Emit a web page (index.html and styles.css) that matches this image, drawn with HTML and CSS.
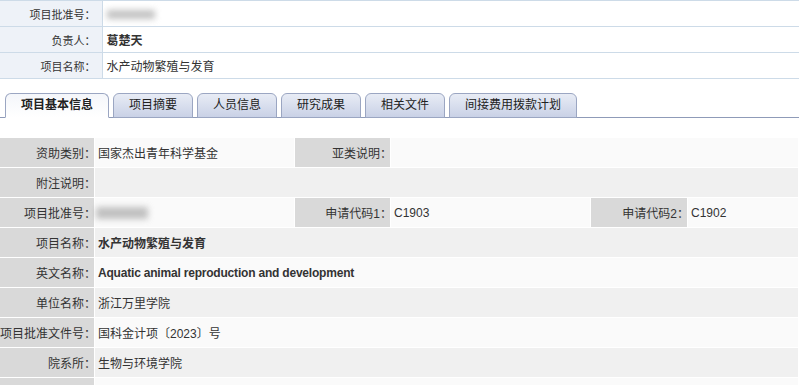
FILE: index.html
```html
<!DOCTYPE html>
<html lang="zh-CN">

<head>
    <meta charset="UTF-8">
    <meta name="viewport" content="width=device-width, initial-scale=1.0">
    <title>项目信息</title>

    <link rel="stylesheet" href="styles.css">
</head>

<body>
    <!-- Summary header -->
    <table class="summary">
        <colgroup>
            <col class="summary-label-col">
            <col>
        </colgroup>
        <tr>
            <th>项目批准号：</th>
            <td><span class="smudge smudge-sm"></span></td>
        </tr>
        <tr>
            <th>负责人：</th>
            <td class="strong">葛楚天</td>
        </tr>
        <tr>
            <th>项目名称：</th>
            <td>水产动物繁殖与发育</td>
        </tr>
    </table>

    <!-- Tabs -->
    <ul class="tabs">
        <li class="tab active">项目基本信息</li>
        <li class="tab">项目摘要</li>
        <li class="tab">人员信息</li>
        <li class="tab">研究成果</li>
        <li class="tab">相关文件</li>
        <li class="tab">间接费用拨款计划</li>
    </ul>

    <!-- Basic info -->
    <table class="info">
        <colgroup>
            <col class="c-label1">
            <col class="c-value">
            <col class="c-label2">
            <col class="c-value">
            <col class="c-label3">
            <col>
        </colgroup>
        <tr>
            <th>资助类别：</th>
            <td>国家杰出青年科学基金</td>
            <th>亚类说明：</th>
            <td colspan="3"></td>
        </tr>
        <tr>
            <th>附注说明：</th>
            <td colspan="5"></td>
        </tr>
        <tr>
            <th>项目批准号：</th>
            <td><span class="smudge smudge-lg"></span></td>
            <th>申请代码1：</th>
            <td>C1903</td>
            <th>申请代码2：</th>
            <td>C1902</td>
        </tr>
        <tr>
            <th>项目名称：</th>
            <td colspan="5" class="strong">水产动物繁殖与发育</td>
        </tr>
        <tr>
            <th>英文名称：</th>
            <td colspan="5" class="strong en">Aquatic animal reproduction and development</td>
        </tr>
        <tr>
            <th>单位名称：</th>
            <td colspan="5">浙江万里学院</td>
        </tr>
        <tr>
            <th>项目批准文件号：</th>
            <td colspan="5">国科金计项〔2023〕号</td>
        </tr>
        <tr>
            <th>院系所：</th>
            <td colspan="5">生物与环境学院</td>
        </tr>
        <tr>
            <th></th>
            <td colspan="5"></td>
        </tr>
    </table>
</body>

</html>
```

FILE: styles.css
```css
body {
    margin: 0;
    font-family: "Liberation Sans", "Noto Sans CJK SC", sans-serif;
    font-size: 12px;
    color: #333;
    background-color: white;
}

table {
    width: 100%;
    table-layout: fixed;
}

th {
    font-weight: normal;
    text-align: right;
    white-space: nowrap;
}

td {
    text-align: left;
}

.strong {
    font-weight: bold;
}

.en {
    letter-spacing: -0.2px;
}

/* blurred-out id numbers */
.smudge {
    display: inline-block;
    vertical-align: middle;
    background-color: #9a9a9a;
    filter: blur(3px);
    opacity: 0.6;
}

.smudge-sm {
    width: 48px;
    height: 9px;
}

.smudge-lg {
    width: 52px;
    height: 12px;
    margin-left: -2px;
}

/* summary header */
.summary {
    border-collapse: collapse;
    border-top: 1px solid #cddbe8;
}

.summary-label-col {
    width: 102px;
}

.summary th,
.summary td {
    height: 25px;
    padding: 0;
    border-bottom: 1px solid #cddbe8;
}

.summary th {
    font-size: 11px;
    background-color: #eef2f8;
    border-right: 1px solid #cddbe8;
    padding-right: 6px;
}

.summary td {
    padding-left: 4px;
}

/* tabs */
.tabs {
    display: flex;
    gap: 4px;
    margin: 14px 0 0;
    padding: 0 0 0 5px;
    list-style: none;
    border-bottom: 1px solid #8f9bb8;
}

.tab {
    height: 23px;
    line-height: 23px;
    padding: 0 15px;
    margin-bottom: -1px;
    border: 1px solid #9ba6c2;
    border-radius: 6px 6px 0 0;
    background: linear-gradient(#e8ecf5, #c9d1e6);
    color: #222;
}

.tab.active {
    font-weight: bold;
    border-bottom-color: white;
    background: linear-gradient(#f4f6fa, #ffffff);
}

/* basic info table */
.info {
    margin-top: 19px;
    border-spacing: 1px;
    margin-left: -1px;
    width: calc(100% + 1px);
}

.c-label1 {
    width: 94px;
}

.c-value {
    width: 199px;
}

.c-label2 {
    width: 95px;
}

.c-label3 {
    width: 96px;
}

.info th,
.info td {
    height: 29px;
    padding: 0;
}

.info th {
    /* half-width colon */
    font-feature-settings: "halt";
    background-color: #d9d9d9;
    padding-right: 4px;
}

.info td {
    padding-left: 3px;
}

.info tr:nth-child(odd) td {
    background-color: #fafafa;
}

.info tr:nth-child(even) td {
    background-color: #f0f0f0;
}
```
